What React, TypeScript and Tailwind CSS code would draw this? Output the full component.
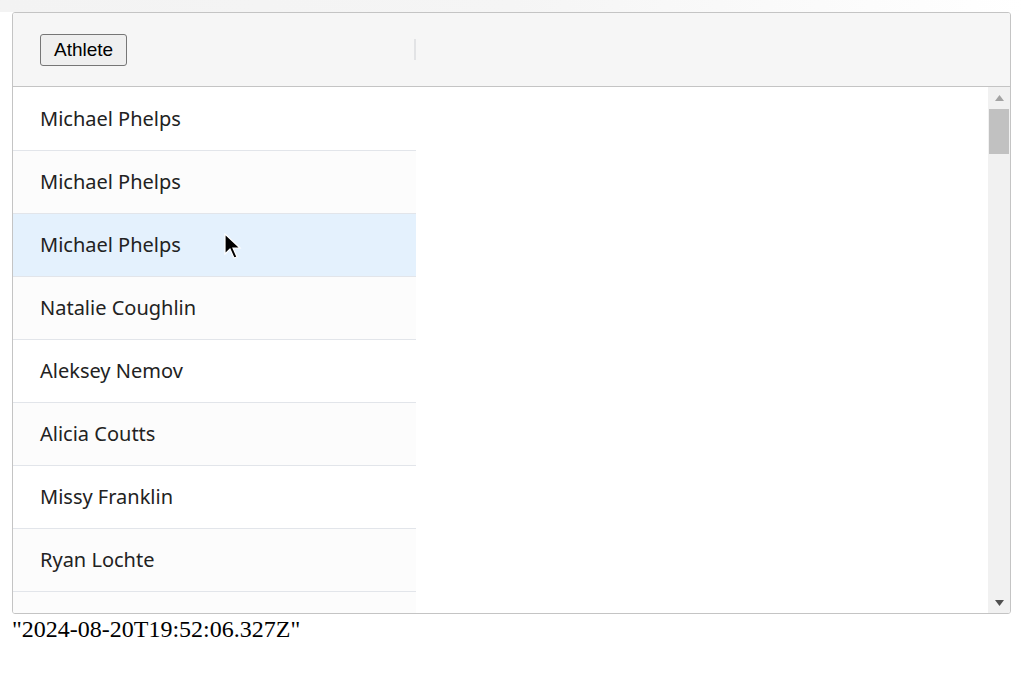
import React from 'react';

const athletes: string[] = [
  'Michael Phelps',
  'Michael Phelps',
  'Michael Phelps',
  'Natalie Coughlin',
  'Aleksey Nemov',
  'Alicia Coutts',
  'Missy Franklin',
  'Ryan Lochte',
];

const App: React.FC = () => {
  return (
    <div className="relative w-[1024px] h-[693px] bg-white">
      <div className="h-3 bg-gradient-to-r from-[#f3f3f3] via-[#f5f5f5] to-white" />
      <div className="mx-3 w-[999px] h-[602px] border border-[#c4c4c4] rounded-[3px] flex flex-col overflow-hidden">
        {/* header */}
        <div className="h-[74px] shrink-0 bg-[#f6f6f6] border-b border-[#c4c4c4] flex items-center">
          <div className="w-[403px] flex items-center justify-between pl-[27px]">
            <button
              className="h-[32px] px-[13px] border border-[#767676] rounded-[3px] bg-[#efefef] text-[19px] text-black leading-none"
              style={{ fontFamily: '"Liberation Sans", Arial, sans-serif' }}
            >
              Athlete
            </button>
            <div className="w-[2px] h-[21px] bg-[#e2e3e5]" />
          </div>
        </div>
        {/* body */}
        <div className="flex-1 flex overflow-hidden">
          <div className="flex-1 overflow-hidden pt-px">
            {athletes.map((name, i) => (
              <div
                key={i}
                className={
                  'w-[403px] h-[63px] shrink-0 flex items-center pl-[27px] border-b border-[#e2e5ea] text-[20px] text-[#222]' +
                  (i === 2 ? ' bg-[#e4f1fd]' : i % 2 === 1 ? ' bg-[#fcfcfc]' : ' bg-white')
                }
                style={{ fontFamily: '"Noto Sans", "Open Sans", sans-serif' }}
              >
                {name}
              </div>
            ))}
            <div className="w-[403px] h-[63px] bg-[#fcfcfc]" />
          </div>
          {/* scrollbar */}
          <div className="w-[22px] shrink-0 bg-[#f1f1f1] flex flex-col items-center">
            <div className="h-[21px] w-full flex items-center justify-center">
              <svg width="9" height="6" viewBox="0 0 9 6"><path d="M4.5 0L9 6H0z" fill="#a3a3a3" /></svg>
            </div>
            <div className="w-[20px] h-[45px] bg-[#c1c1c1] mt-[1px]" />
            <div className="flex-1" />
            <div className="h-[21px] w-full flex items-center justify-center">
              <svg width="9" height="6" viewBox="0 0 9 6"><path d="M0 0H9L4.5 6z" fill="#505050" /></svg>
            </div>
          </div>
        </div>
      </div>
      <div
        className="pl-3 text-[24px] leading-[30px] text-black"
        style={{ fontFamily: '"Liberation Serif", "Times New Roman", serif' }}
      >
        "2024-08-20T19:52:06.327Z"
      </div>
      {/* cursor */}
      <svg className="absolute left-[224px] top-[233px]" width="18" height="28" viewBox="0 0 18 28">
        <path d="M1 1 L1 21 L6 16 L10 25 L13 24 L9 15 L16 15 Z" fill="#000" stroke="#fff" strokeWidth="1.2" />
      </svg>
    </div>
  );
};

export default App;
